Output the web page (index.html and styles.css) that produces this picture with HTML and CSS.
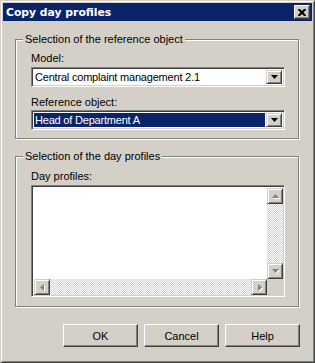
FILE: index.html
```html
<!DOCTYPE html>
<html lang="en">

<head>
    <meta charset="UTF-8" />
    <title>Copy day profiles</title>
    <link rel="stylesheet" href="styles.css">
</head>

<body>

    <div class="window">
        <div class="titlebar">
            <span class="title">Copy day profiles</span>
            <span class="close-btn">
                <svg width="8" height="7" viewBox="0 0 8 7">
                    <path d="M0 0h2l2 2 2-2h2v1l-2.5 2.5 2.5 2.5v1h-2l-2-2-2 2h-2v-1l2.5-2.5-2.5-2.5z" fill="#000" />
                </svg>
            </span>
        </div>

        <div class="dialog-body">
            <div class="group group-ref">
                <span class="legend">Selection of the reference object</span>

                <div class="field-label">Model:</div>
                <div class="combo">
                    <span class="combo-text">Central complaint management 2.1</span>
                    <span class="drop-btn">
                        <svg width="7" height="4" viewBox="0 0 7 4"><path d="M0 0h7l-3.5 4z" fill="#000" /></svg>
                    </span>
                </div>

                <div class="field-label second">Reference object:</div>
                <div class="combo">
                    <span class="combo-text selected">Head of Department A</span>
                    <span class="drop-btn">
                        <svg width="7" height="4" viewBox="0 0 7 4"><path d="M0 0h7l-3.5 4z" fill="#000" /></svg>
                    </span>
                </div>
            </div>

            <div class="group group-days">
                <span class="legend">Selection of the day profiles</span>

                <div class="field-label">Day profiles:</div>
                <div class="listbox">
                    <div class="list-main">
                        <div class="list-area"></div>
                        <div class="vscroll">
                            <span class="scroll-btn">
                                <svg width="7" height="5" viewBox="0 0 7 5"><path d="M3.5 0l3.5 4h-7z" fill="#808080" /></svg>
                            </span>
                            <span class="track"></span>
                            <span class="scroll-btn">
                                <svg width="7" height="5" viewBox="0 0 7 5"><path d="M0 0h7l-3.5 4z" fill="#808080" /></svg>
                            </span>
                        </div>
                    </div>
                    <div class="hscroll-row">
                        <div class="hscroll">
                            <span class="scroll-btn">
                                <svg width="5" height="7" viewBox="0 0 5 7"><path d="M0 3.5l4-3.5v7z" fill="#808080" /></svg>
                            </span>
                            <span class="track"></span>
                            <span class="scroll-btn">
                                <svg width="5" height="7" viewBox="0 0 5 7"><path d="M1 0l4 3.5-4 3.5z" fill="#808080" /></svg>
                            </span>
                        </div>
                        <span class="corner"></span>
                    </div>
                </div>
            </div>

            <div class="button-row">
                <button class="dlg-btn">OK</button>
                <button class="dlg-btn">Cancel</button>
                <button class="dlg-btn">Help</button>
            </div>
        </div>
    </div>

</body>

</html>
```

FILE: styles.css
```css
body {
    margin: 0;
    padding: 0;
    background: #d4d0c8;
    font-family: "Liberation Sans", Arial, sans-serif;
    font-size: 11px;
    color: #000;
}

.window {
    box-sizing: border-box;
    width: 315px;
    height: 363px;
    padding: 2px;
    background: #d4d0c8;
    border: 1px solid;
    border-color: #d4d0c8 #404040 #404040 #d4d0c8;
    box-shadow: inset 1px 1px 0 #fff, inset -1px -1px 0 #808080;
}

.titlebar {
    display: flex;
    align-items: center;
    justify-content: space-between;
    height: 18px;
    background: #0a246a;
    padding: 0 2px 0 3px;
}

.title {
    color: #fff;
    font-family: "DejaVu Sans", Verdana, sans-serif;
    font-weight: bold;
    font-size: 10.8px;
}

.close-btn {
    box-sizing: border-box;
    display: flex;
    align-items: center;
    justify-content: center;
    width: 16px;
    height: 14px;
    background: #d4d0c8;
    border: 1px solid;
    border-color: #fff #404040 #404040 #fff;
    box-shadow: inset -1px -1px 0 #808080;
}

.dialog-body {
    padding: 18px 13px 0 12px;
}

.group {
    position: relative;
    border: 1px solid #808080;
    box-shadow: 1px 1px 0 #fff, inset 1px 1px 0 #fff;
    padding: 12px 13px 8px 15px;
}

.legend {
    position: absolute;
    top: -7px;
    left: 7px;
    padding: 0 2px;
    background: #d4d0c8;
    line-height: 13px;
}

.group-days {
    margin-top: 17px;
    padding: 13px 13px 9px 15px;
}

.field-label {
    line-height: 13px;
    margin-bottom: 2px;
}

.field-label.second {
    margin-top: 9px;
    margin-bottom: 1px;
}

.combo {
    box-sizing: border-box;
    display: flex;
    height: 20px;
    background: #fff;
    border: 1px solid;
    border-color: #808080 #fff #fff #808080;
    box-shadow: inset 1px 1px 0 #404040, inset -1px -1px 0 #d4d0c8;
    padding: 2px;
}

.combo-text {
    flex: 1;
    line-height: 14px;
    padding-left: 1px;
    letter-spacing: -0.2px;
}

.combo-text.selected {
    background: #0a246a;
    color: #fff;
}

.drop-btn {
    box-sizing: border-box;
    display: flex;
    align-items: center;
    justify-content: center;
    width: 16px;
    height: 14px;
    margin-left: 1px;
    background: #d4d0c8;
    border: 1px solid;
    border-color: #d4d0c8 #404040 #404040 #d4d0c8;
    box-shadow: inset 1px 1px 0 #fff, inset -1px -1px 0 #808080;
}

.listbox {
    box-sizing: border-box;
    display: flex;
    flex-direction: column;
    height: 112px;
    background: #fff;
    border: 1px solid;
    border-color: #808080 #fff #fff #808080;
    box-shadow: inset 1px 1px 0 #404040, inset -1px -1px 0 #d4d0c8;
    padding: 2px 1px 1px 2px;
}

.list-main {
    flex: 1;
    display: flex;
}

.list-area {
    flex: 1;
}

.vscroll {
    display: flex;
    flex-direction: column;
    width: 16px;
}

.hscroll-row {
    display: flex;
    height: 16px;
}

.hscroll {
    flex: 1;
    display: flex;
}

.track {
    flex: 1;
    background: repeating-conic-gradient(#fff 0 25%, #d4d0c8 0 50%) 0 0 / 2px 2px;
}

.corner {
    width: 16px;
    background: #d4d0c8;
}

.scroll-btn {
    box-sizing: border-box;
    display: flex;
    align-items: center;
    justify-content: center;
    width: 16px;
    height: 16px;
    background: #d4d0c8;
    border: 1px solid;
    border-color: #d4d0c8 #404040 #404040 #d4d0c8;
    box-shadow: inset 1px 1px 0 #fff, inset -1px -1px 0 #808080;
}

.scroll-btn svg {
    filter: drop-shadow(1px 1px 0 #fff);
}

.button-row {
    display: flex;
    justify-content: flex-end;
    gap: 6px;
    margin-top: 17px;
    margin-right: -1px;
}

.dlg-btn {
    box-sizing: border-box;
    width: 75px;
    height: 23px;
    padding: 0;
    background: #d4d0c8;
    font-family: "Liberation Sans", Arial, sans-serif;
    font-size: 11px;
    color: #000;
    border: 1px solid;
    border-color: #fff #404040 #404040 #fff;
    box-shadow: inset -1px -1px 0 #808080;
}
```
